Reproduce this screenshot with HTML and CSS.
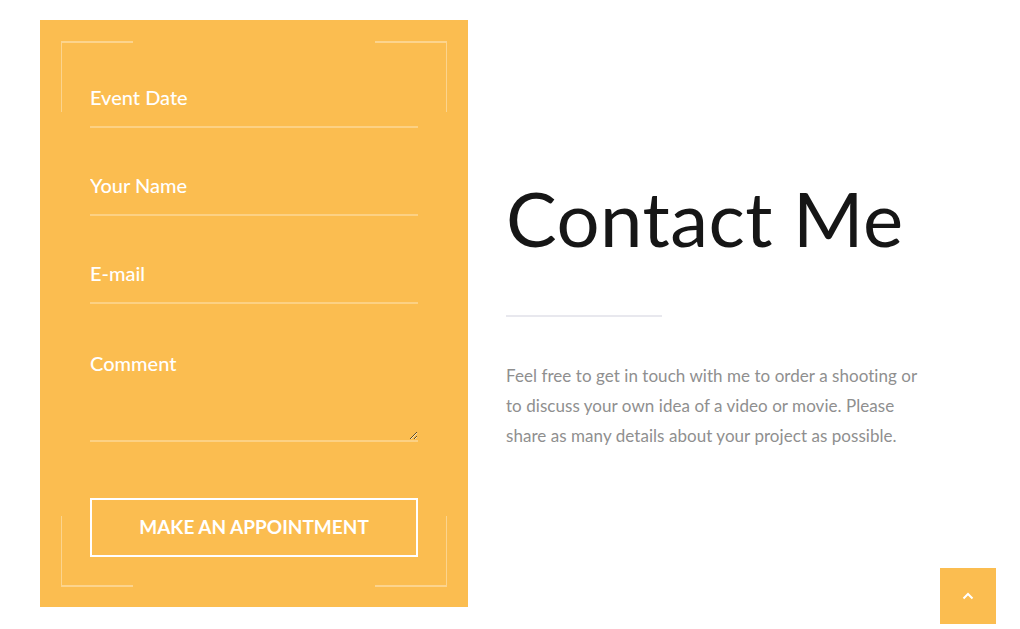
FILE: index.html
```html
<!DOCTYPE html>
<html lang="en">
<head>
<meta charset="utf-8">
<title>Contact Me</title>
<link rel="stylesheet" href="styles.css">
</head>
<body>
<main class="page">
  <section class="panel">
    <div class="frame" aria-hidden="true">
      <span class="corner tl"></span>
      <span class="corner tr"></span>
      <span class="corner bl"></span>
      <span class="corner br"></span>
    </div>
    <form class="form">
      <input class="field" type="text" placeholder="Event Date">
      <input class="field" type="text" placeholder="Your Name">
      <input class="field" type="email" placeholder="E-mail">
      <textarea class="field area" placeholder="Comment"></textarea>
      <button class="submit" type="button">Make an appointment</button>
    </form>
  </section>
  <section class="info">
    <h1 class="title">Contact Me</h1>
    <div class="divider"></div>
    <p class="text">Feel free to get in touch with me to order a shooting or to discuss your own idea of a video or movie. Please share as many details about your project as possible.</p>
  </section>
</main>
<a class="to-top" href="#" aria-label="Back to top">
  <svg width="12" height="8" viewBox="0 0 12 8"><polyline points="1.5,6.5 6,2 10.5,6.5" fill="none" stroke="#fff" stroke-width="2"/></svg>
</a>
</body>
</html>
```
FILE: styles.css
```css
* { box-sizing: border-box; }
html, body { margin: 0; padding: 0; background: #fff; }
body { font-family: Lato, "Liberation Sans", sans-serif; }

.page {
  display: flex;
  align-items: flex-start;
  padding: 20px 0 0 40px;
}

.panel {
  position: relative;
  width: 428px;
  background: #fbbd50;
  padding: 50px 50px 50px 50px;
}

.frame {
  position: absolute;
  inset: 21px 21px 20px 21px;
  pointer-events: none;
}
.corner {
  position: absolute;
  width: 72px;
  height: 71px;
  border: 0 solid rgba(255, 255, 255, 0.35);
}
.corner.tl { top: 0; left: 0; border-top-width: 2px; border-left-width: 1px; }
.corner.tr { top: 0; right: 0; border-top-width: 2px; border-right-width: 1px; }
.corner.bl { bottom: 0; left: 0; border-bottom-width: 2px; border-left-width: 1px; }
.corner.br { bottom: 0; right: 0; border-bottom-width: 2px; border-right-width: 1px; }

.form {
  position: relative;
  display: flex;
  flex-direction: column;
}

.field {
  display: block;
  width: 100%;
  height: 58px;
  margin: 0 0 30px 0;
  padding: 0 0 2px 0;
  border: 0;
  border-bottom: 2px solid rgba(255, 255, 255, 0.3);
  background: transparent;
  font-family: Lato, "Liberation Sans", sans-serif;
  font-size: 20px;
  font-weight: 500;
  color: #fff;
  outline: none;
  border-radius: 0;
}
.field::placeholder { color: #fff; opacity: 1; }

.area {
  height: 108px;
  padding: 17px 0 0 0;
  line-height: 24px;
  margin-bottom: 56px;
  resize: vertical;
}

.submit {
  height: 59px;
  padding: 0 0 2px 0;
  border: 2px solid #fff;
  background: transparent;
  color: #fff;
  font-family: Lato, "Liberation Sans", sans-serif;
  font-weight: 700;
  font-size: 19px;
  text-transform: uppercase;
  cursor: pointer;
}

.info {
  width: 420px;
  margin-left: 38px;
  padding-top: 158px;
}

.title {
  margin: 0;
  font-family: Lato, "Liberation Sans", sans-serif;
  font-weight: 400;
  font-size: 76px;
  line-height: 80px;
  color: #161616;
  letter-spacing: 0.5px;
}

.divider {
  width: 156px;
  height: 2px;
  margin-top: 57px;
  background: #e8e8ee;
}

.text {
  margin: 44px 0 0 0;
  font-size: 17px;
  line-height: 30px;
  color: #8f8f8f;
  letter-spacing: 0.05px;
}

.to-top {
  position: fixed;
  right: 24px;
  bottom: 5px;
  width: 56px;
  height: 56px;
  background: #fbbd50;
  display: flex;
  align-items: center;
  justify-content: center;
}
```
